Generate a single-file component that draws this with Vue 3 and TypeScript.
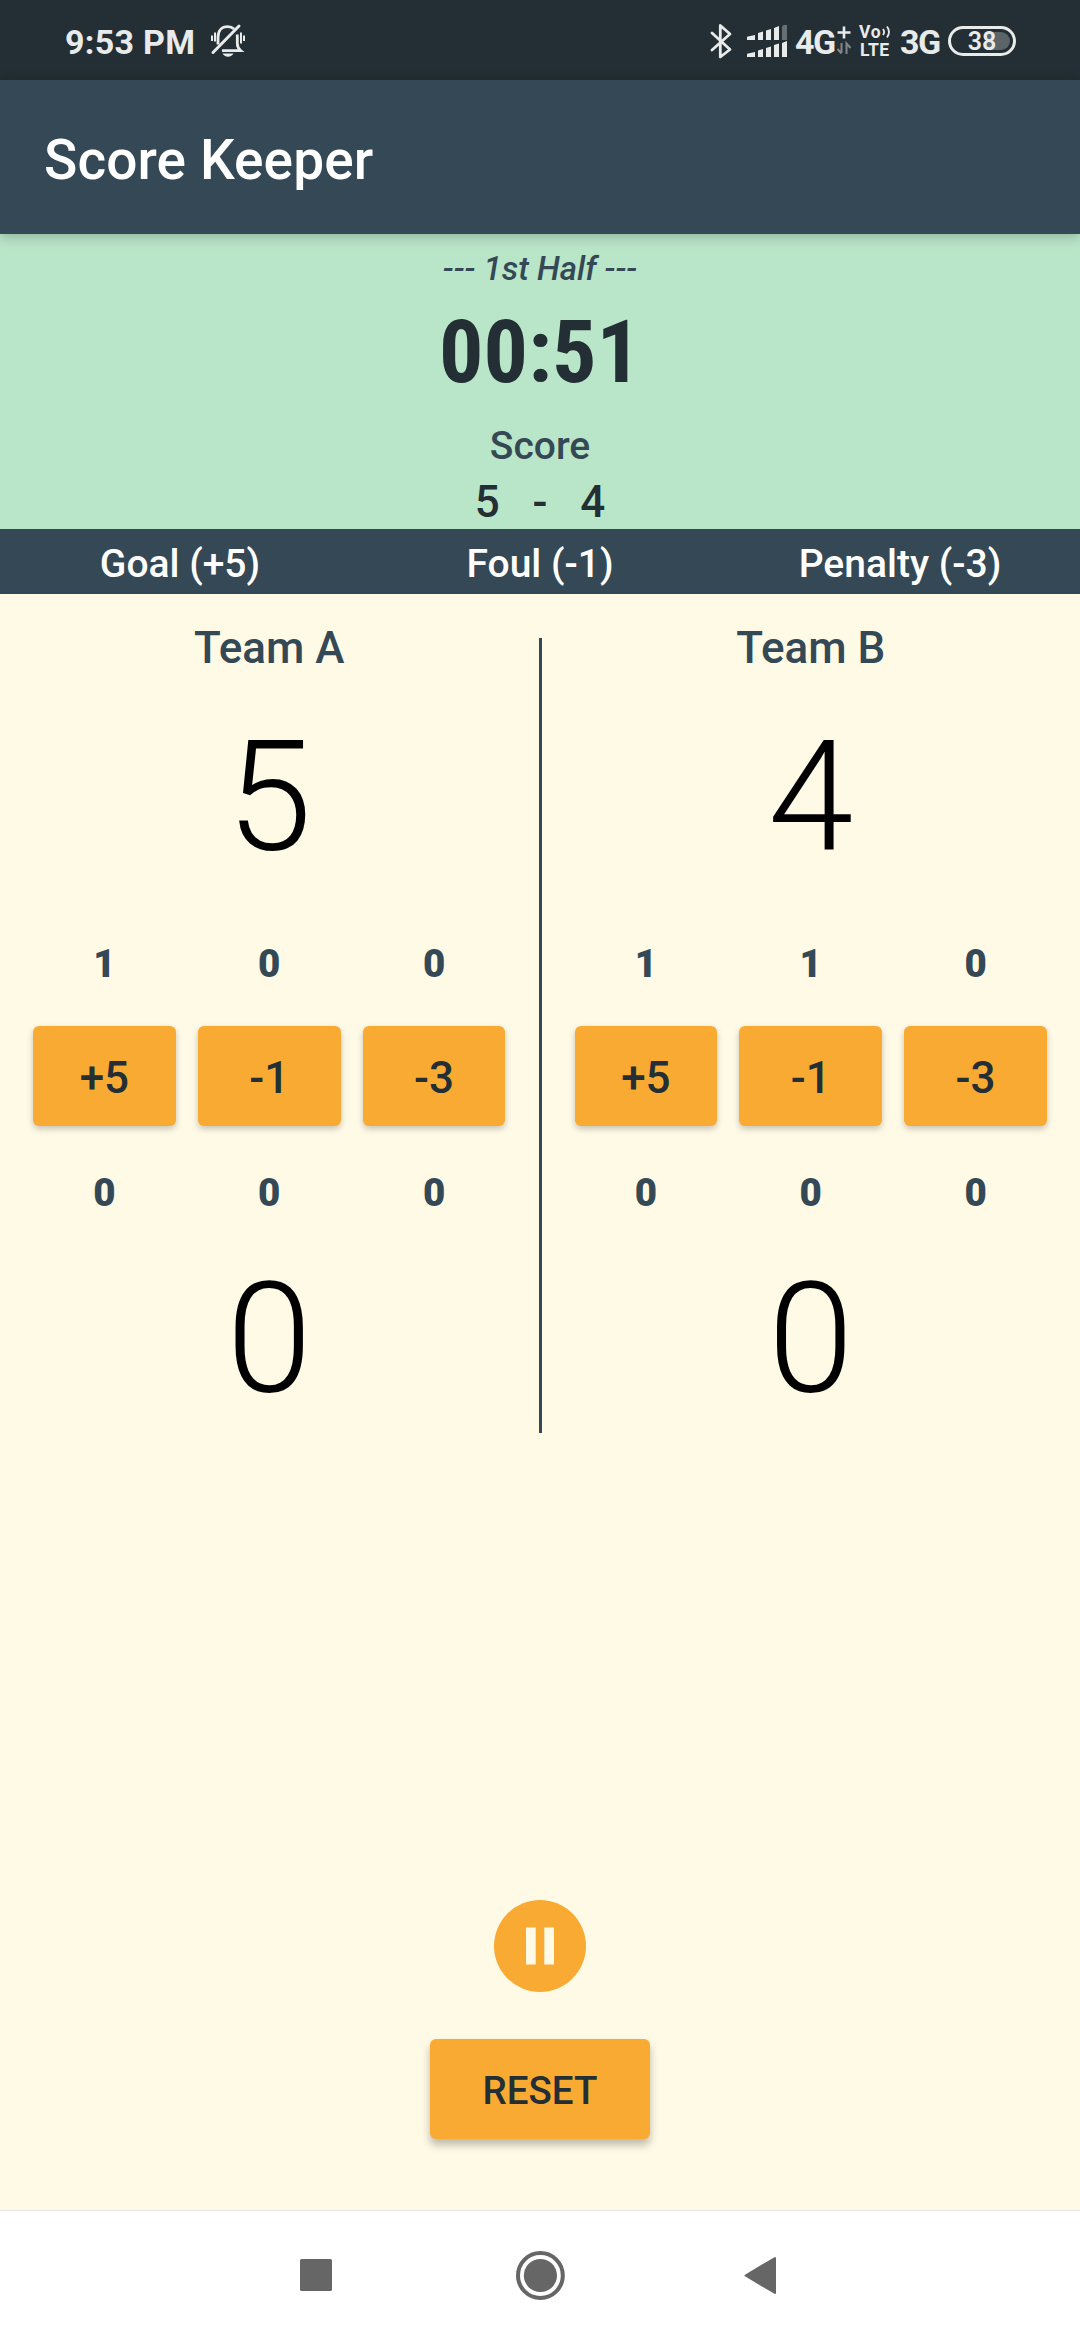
<script setup lang="ts">
interface Team {
  name: string
  score: string
  counts: string[]
  subCounts: string[]
  subScore: string
}

const legend: string[] = ['Goal (+5)', 'Foul (-1)', 'Penalty (-3)']
const actions: string[] = ['+5', '-1', '-3']
const teams: Team[] = [
  { name: 'Team A', score: '5', counts: ['1', '0', '0'], subCounts: ['0', '0', '0'], subScore: '0' },
  { name: 'Team B', score: '4', counts: ['1', '1', '0'], subCounts: ['0', '0', '0'], subScore: '0' },
]
const matchScore = '5\u00a0\u00a0\u00a0-\u00a0\u00a0\u00a04'
</script>

<template>
  <div class="screen">
    <header class="status">
      <span class="clock">9:53 PM</span>
      <svg class="bell" width="36" height="36" viewBox="0 0 36 36" fill="none" stroke="#e9eaea">
        <path d="M8 21.5V14.5C8 7.5 12 3.7 17.5 3.7c2.8 0 5 .8 6.600 2.300" stroke-width="2.800" />
        <path d="M27.300 11.500v9c0 3 1 5 3.500 7.200H12" stroke-width="2.800" />
        <path d="M29 3L3 29.500" stroke-width="3" stroke-linecap="round" />
        <path d="M12.500 30.500h11c-1 2-3 3.200-5.500 3.200s-4.500-1.200-5.500-3.200z" fill="#e9eaea" stroke="none" />
        <path d="M2 12.500v5.500M5 9.500v9M31 9.500v11M34 12.500v5.500" stroke-width="2" />
      </svg>
      <span class="grow"></span>
      <svg class="bluetooth" width="22" height="36" viewBox="0 0 22 36" fill="none" stroke="#e9eaea" stroke-width="2.800" stroke-linejoin="round" stroke-linecap="round">
        <path d="M2 10L20 26.500 10.300 34V2.500L20 11 2 27" />
      </svg>
      <svg class="signal" width="40" height="34" viewBox="0 0 40 34" fill="#e9eaea">
        <path d="M0 16v-3.300L8 11v5zM11 16V9l5-1.500V16zM19 16V6.500L24 5v11zM27 16V4l5-2v14z" />
        <path d="M35 16V2.500L36.500 1H40v15z" fill="#667074" />
        <path d="M0 33v-3.300L8 28v5zM11 33v-6.500l5-1.500v8zM19 33v-9l5-1.500V33zM27 33V21l5-1.500V33zM35 33V19l5-2v16z" />
      </svg>
      <span class="net net4">4G</span>
      <svg class="plus" width="14" height="30" viewBox="0 0 14 30" fill="none">
        <path d="M7 .5v12M.5 6.500h13" stroke="#e9eaea" stroke-width="2.600" />
        <path d="M4.500 17v10M.5 23l4 4.500M9.500 28V17.500L13.500 22" stroke="#80888b" stroke-width="2" />
      </svg>
      <span class="volte">
        <span class="vo"><span>Vo</span><svg width="9" height="14" viewBox="0 0 9 14" fill="none" stroke="#e9eaea" stroke-width="1.800"><path d="M1 4q2.200 3 0 6M5 1.500q4 5.500 0 11" /></svg></span>
        <span class="lte">LTE</span>
      </span>
      <span class="net net3">3G</span>
      <span class="battery"><span class="level"></span><span class="percent">38</span></span>
    </header>

    <div class="appbar">Score Keeper</div>

    <section class="match">
      <div class="half">--- 1st Half ---</div>
      <div class="timer">00:51</div>
      <div class="label">Score</div>
      <div class="total">{{ matchScore }}</div>
    </section>

    <div class="legend">
      <span v-for="item in legend" :key="item">{{ item }}</span>
    </div>

    <main class="board">
      <template v-for="(team, index) in teams" :key="team.name">
        <div v-if="index > 0" class="divider"></div>
        <section class="team">
          <div class="name">{{ team.name }}</div>
          <div class="big">{{ team.score }}</div>
          <div class="row counts">
            <span v-for="(n, i) in team.counts" :key="i">{{ n }}</span>
          </div>
          <div class="row actions">
            <button v-for="a in actions" :key="a" class="btn">{{ a }}</button>
          </div>
          <div class="row counts second">
            <span v-for="(n, i) in team.subCounts" :key="i">{{ n }}</span>
          </div>
          <div class="big second">{{ team.subScore }}</div>
        </section>
      </template>
    </main>

    <div class="controls">
      <svg class="pause" width="92" height="92" viewBox="0 0 92 92">
        <circle cx="46" cy="46" r="46" fill="#f9aa33" />
        <path d="M32 27.500h9.700v37H32zM50.300 27.500H60v37h-9.700z" fill="#fffae6" />
      </svg>
      <button class="btn reset">RESET</button>
    </div>

    <nav class="nav">
      <svg width="480" height="50" viewBox="0 0 480 50" fill="#666">
        <rect x="0" y="9" width="32" height="32" rx="1.500" />
        <circle cx="240.400" cy="25.500" r="22.400" fill="none" stroke="#666" stroke-width="4" />
        <circle cx="240.400" cy="25.500" r="16.600" />
        <path d="M445.500 25.500L475 8v35z" stroke="#666" stroke-width="2" stroke-linejoin="round" />
      </svg>
    </nav>
  </div>
</template>

<style>
body {
  margin: 0;
  background: #fffae6;
}
</style>

<style scoped>
.screen {
  display: flex;
  flex-direction: column;
  width: 1080px;
  height: 2340px;
  overflow: hidden;
  background: #fffae6;
  color: #344955;
  font-family: Roboto, "Liberation Sans", sans-serif;
  font-weight: 500;
}

.status {
  display: flex;
  align-items: flex-start;
  box-sizing: border-box;
  height: 80px;
  padding: 0 64px 0 65px;
  background: #232f34;
  color: #e9eaea;
}

.clock {
  width: 130px;
  margin-top: 22px;
  font-size: 34px;
  font-weight: 700;
  line-height: 40px;
  letter-spacing: 0.3px;
  white-space: nowrap;
}

.bell {
  margin: 23px 0 0 15px;
}

.grow {
  flex: 1;
}

.bluetooth {
  margin: 23px 15px 0 0;
}

.signal {
  margin: 24px 8px 0 0;
}

.net {
  margin-top: 22px;
  font-size: 34px;
  font-weight: 700;
  line-height: 40px;
  letter-spacing: -1.4px;
}

.net4 {
  width: 42px;
}

.net3 {
  width: 48px;
}

.plus {
  margin: 26px 8px 0 0;
}

.volte {
  display: flex;
  flex-direction: column;
  width: 41px;
  margin-top: 23px;
  font-size: 17.5px;
  font-weight: 700;
  line-height: 18px;
}

.vo {
  display: flex;
  align-items: center;
  letter-spacing: 0.8px;
}

.lte {
  margin-left: 1px;
  letter-spacing: 0.4px;
}

.battery {
  position: relative;
  display: flex;
  justify-content: center;
  box-sizing: border-box;
  width: 68px;
  height: 30px;
  margin-top: 26px;
  border: 3px solid #e9eaea;
  border-radius: 15px;
}

.level {
  position: absolute;
  top: 3px;
  right: 3px;
  width: 24px;
  height: 18px;
  border-radius: 0 9px 9px 0;
  background: #5b6469;
}

.percent {
  position: relative;
  font-size: 25px;
  line-height: 26px;
  font-weight: 600;
}

.appbar {
  position: relative;
  box-sizing: border-box;
  height: 154px;
  padding: 6px 44px 0;
  background: #344955;
  box-shadow: 0 2px 12px rgba(0, 0, 0, 0.25);
  color: #fff;
  font-size: 55px;
  line-height: 148px;
  letter-spacing: 0.1px;
}

.match {
  display: flex;
  flex-direction: column;
  align-items: center;
  box-sizing: border-box;
  height: 295px;
  padding-top: 15px;
  background: #b9e5c9;
}

.half {
  font-size: 33px;
  font-style: italic;
  line-height: 40px;
}

.timer {
  margin-top: 13px;
  color: #232f34;
  font-family: "Roboto Condensed", Roboto, sans-serif;
  font-stretch: condensed;
  font-size: 88px;
  font-weight: 700;
  line-height: 100px;
}

.label {
  margin-top: 21px;
  font-size: 39px;
  line-height: 46px;
}

.total {
  margin-top: 7px;
  color: #232f34;
  font-size: 44px;
  line-height: 52px;
}

.legend {
  display: flex;
  box-sizing: border-box;
  height: 65px;
  padding-top: 5px;
  background: #344955;
  color: #fff;
  font-size: 39px;
  line-height: 60px;
  text-align: center;
}

.legend span {
  flex: 1;
}

.board {
  display: flex;
  height: 839px;
}

.team {
  display: flex;
  flex: 1;
  flex-direction: column;
  padding: 28px 33px 0;
  text-align: center;
}

.divider {
  width: 3px;
  height: 795px;
  margin-top: 44px;
  background: #344955;
}

.name {
  font-size: 44px;
  line-height: 52px;
}

.big {
  margin-top: 34px;
  color: #000;
  font-size: 154px;
  font-weight: 300;
  line-height: 180px;
}

.row {
  display: flex;
  gap: 22px;
}

.counts {
  margin-top: 53px;
  font-size: 38.5px;
  font-weight: 900;
  line-height: 46px;
}

.counts span,
.actions .btn {
  flex: 1;
}

.actions {
  margin-top: 39px;
}

.counts.second {
  margin-top: 44px;
}

.big.second {
  margin-top: 34px;
}

.btn {
  height: 100px;
  padding: 3px 0 0;
  border: 0;
  border-radius: 6px;
  background: #f9aa33;
  box-shadow: 0 3px 6px rgba(0, 0, 0, 0.22);
  color: #232f34;
  font-family: inherit;
  font-size: 44px;
  font-weight: 500;
  line-height: 52px;
}

.controls {
  display: flex;
  flex: 1;
  flex-direction: column;
  align-items: center;
  padding-top: 467px;
}

.pause {
  flex: none;
}

.reset {
  width: 220px;
  margin-top: 47px;
  box-shadow: 0 6px 8px rgba(0, 0, 0, 0.26);
  font-size: 38.5px;
}

.nav {
  box-sizing: border-box;
  height: 130px;
  padding: 39px 0 0 300px;
  border-top: 1px solid #e3e3e3;
  background: #fff;
}
</style>
